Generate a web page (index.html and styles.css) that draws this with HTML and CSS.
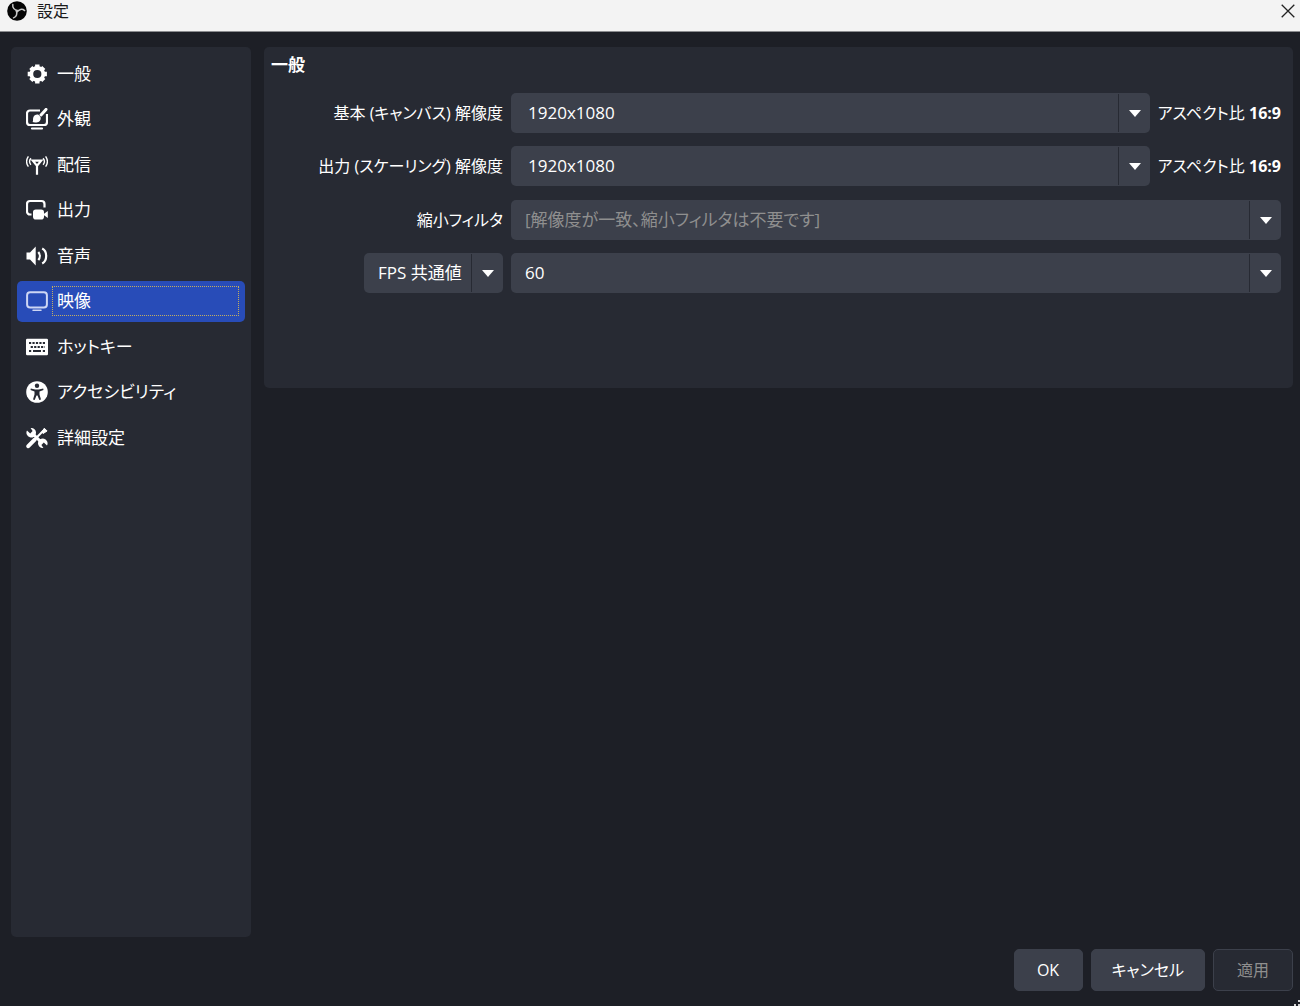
FILE: index.html
```html
<!DOCTYPE html>
<html lang="ja">
<head>
    <meta charset="UTF-8">
    <meta name="viewport" content="width=device-width, initial-scale=1.0">
    <title>設定</title>
    <link rel="stylesheet" href="styles.css">
</head>
<body>
    <header class="titlebar">
        <svg class="app-icon" viewBox="0 0 20 20" aria-hidden="true">
            <circle cx="10" cy="10" r="9.8" fill="#050505"/>
            <g fill="none" stroke="#c8c8c8" stroke-width="1.5" stroke-linecap="round">
                <path d="M10.6 9.4C7.6 9.2 5.2 6.8 5.8 3.6"/>
                <path d="M10.6 9.4C7.6 9.2 5.2 6.8 5.8 3.6" transform="rotate(120 10 10)"/>
                <path d="M10.6 9.4C7.6 9.2 5.2 6.8 5.8 3.6" transform="rotate(240 10 10)"/>
            </g>
        </svg>
        <h1>設定</h1>
        <button class="close" type="button" aria-label="閉じる">
            <svg viewBox="0 0 14 14"><path d="M0.7 0.7l12.6 12.6M13.3 0.7L0.7 13.3" fill="none" stroke="#222" stroke-width="1.3"/></svg>
        </button>
    </header>

    <main class="content">
        <nav class="sidebar">
            <ul>
                <li><a href="#general">
                    <svg viewBox="0 0 22 22">
                        <circle cx="11.3" cy="11" r="6" fill="none" stroke="#fff" stroke-width="3.8"/>
                        <g stroke="#fff" stroke-width="4.4">
                            <path d="M11.3 1.4v3M11.3 17.6v3M1.7 11h3M17.9 11h3"/>
                            <path d="M4.8 4.5l2 2M15.8 15.5l2 2M17.8 4.5l-2 2M6.8 15.5l-2 2"/>
                        </g>
                    </svg>
                    <span>一般</span></a></li>
                <li><a href="#appearance">
                    <svg viewBox="0 0 22 22">
                        <path d="M14 2.5H4a3 3 0 0 0-3 3V14a3 3 0 0 0 3 3h14a3 3 0 0 0 3-3V6" fill="none" stroke="#fff" stroke-width="2.2"/>
                        <path d="M6 20.5h10" stroke="#fff" stroke-width="2.2" stroke-linecap="round"/>
                        <path d="M6.5 14c1-1 .2-2.4.7-4.3C8 7.3 10.2 6 12.5 6.7l2 2.3c.8 3-1 5.2-4 5.4-1.5.1-3 .1-4-.4z" fill="#fff"/>
                        <path d="M15 7l5-5.6" stroke="#fff" stroke-width="3" stroke-linecap="round"/>
                    </svg>
                    <span>外観</span></a></li>
                <li><a href="#stream">
                    <svg viewBox="0 0 22 22" fill="none" stroke="#fff">
                        <path d="M6.8 6.7h8.4L11 11.8zM11 11v9.7" stroke-width="2.2"/>
                        <path d="M4.9 4.2c-1.6 2-1.6 4.6 0 6.6M17.1 4.2c1.6 2 1.6 4.6 0 6.6M2.4 2.3c-2.3 3.3-2.3 7.1 0 10.4M19.6 2.3c2.3 3.3 2.3 7.1 0 10.4" stroke-width="1.4"/>
                    </svg>
                    <span>配信</span></a></li>
                <li><a href="#output">
                    <svg viewBox="0 0 22 22">
                        <path d="M5.5 15.5H4a3 3 0 0 1-3-3V5a3 3 0 0 1 3-3h11.5a3 3 0 0 1 3 3v3.5" fill="none" stroke="#fff" stroke-width="2.2"/>
                        <rect x="7" y="10.5" width="11" height="10" rx="2.8" fill="#fff"/>
                        <path d="M17 15.5l4.8-3.5v7z" fill="#fff"/>
                    </svg>
                    <span>出力</span></a></li>
                <li><a href="#audio">
                    <svg viewBox="0 0 22 22">
                        <path d="M0.5 7.5H4L9.7 1.5v19L4 14.5H0.5z" fill="#fff"/>
                        <path d="M12.3 7c2 2.3 2 5.7 0 8" fill="none" stroke="#fff" stroke-width="2.2"/>
                        <path d="M16.2 3.5c5.3 2.8 5.3 12.2 0 15" fill="none" stroke="#fff" stroke-width="2.2"/>
                    </svg>
                    <span>音声</span></a></li>
                <li><a href="#video" class="selected" aria-current="page">
                    <svg viewBox="0 0 22 22">
                        <rect x="1.1" y="2.3" width="19.8" height="15.2" rx="3" fill="none" stroke="#cdd6f4" stroke-width="2"/>
                        <path d="M7 20.3h8" stroke="#cdd6f4" stroke-width="1.5" stroke-linecap="round"/>
                    </svg>
                    <span>映像</span></a></li>
                <li><a href="#hotkeys">
                    <svg viewBox="0 0 22 22">
                        <rect x="0" y="2.7" width="22" height="16.6" rx="1.2" fill="#fff"/>
                        <g stroke="#272a33" stroke-width="2.2">
                            <path d="M3 7h16" stroke-dasharray="2.2 1.25"/>
                            <path d="M4.7 11H19" stroke-dasharray="2.2 1.25"/>
                            <path d="M3 15h2.2M7 15h8M16.8 15H19"/>
                        </g>
                    </svg>
                    <span>ホットキー</span></a></li>
                <li><a href="#accessibility">
                    <svg viewBox="0 0 22 22">
                        <circle cx="11" cy="11" r="10.8" fill="#fff"/>
                        <circle cx="11" cy="4.8" r="2.2" fill="#272a33"/>
                        <path d="M4.8 7.5l4.4 1h3.6l4.4-1 .3 1.5-4 1.4v3.2l1.5 5-1.7.5-1.8-4.6h-1l-1.8 4.6L7 18.6l1.5-5v-3.2L4.500 9z" fill="#272a33"/>
                    </svg>
                    <span>アクセシビリティ</span></a></li>
                <li><a href="#advanced">
                    <svg viewBox="0 0 22 22">
                        <path d="M17.5 3.5L2.6 18.8" stroke="#fff" stroke-width="2"/>
                        <path d="M8.7 12.6l-6.4 6.6" stroke="#fff" stroke-width="4" stroke-linecap="round"/>
                        <path d="M15.8 5.2l2.5-4 2.8 2.8-4 2.5z" fill="#fff" stroke="#fff" stroke-linejoin="round"/>
                        <path d="M6 6l10 10" stroke="#fff" stroke-width="3"/>
                        <path d="M1 3.5a4.8 4.8 0 1 0 3.6-2.5l2 3-2.4 2.4z" fill="#fff"/>
                        <path d="M21 18.5a4.8 4.8 0 1 0-3.6 2.5l-2-3 2.4-2.4z" fill="#fff"/>
                    </svg>
                    <span>詳細設定</span></a></li>
            </ul>
        </nav>

        <section class="panel">
            <h2>一般</h2>
            <div class="form">
                <label for="baseRes">基本 (キャンバス) 解像度</label>
                <div class="field">
                    <div class="combo editable">
                        <select id="baseRes"><option>1920x1080</option></select>
                    </div>
                    <p>アスペクト比 <b>16:9</b></p>
                </div>

                <label for="outputRes">出力 (スケーリング) 解像度</label>
                <div class="field">
                    <div class="combo editable">
                        <select id="outputRes"><option>1920x1080</option></select>
                    </div>
                    <p>アスペクト比 <b>16:9</b></p>
                </div>

                <label for="filter">縮小フィルタ</label>
                <div class="combo">
                    <select id="filter" disabled><option>[解像度が一致、縮小フィルタは不要です]</option></select>
                </div>

                <div class="combo fps-type">
                    <select aria-label="FPS の種類"><option>FPS 共通値</option></select>
                </div>
                <div class="combo">
                    <select aria-label="FPS"><option>60</option></select>
                </div>
            </div>
        </section>
    </main>

    <footer class="buttons">
        <button type="button" class="ok">OK</button>
        <button type="button">キャンセル</button>
        <button type="button" class="apply" disabled>適用</button>
        <svg class="grip" viewBox="0 0 6 6" aria-hidden="true"><path d="M4 0h2v2H4zM0 4h2v2H0zM4 4h2v2H4z" fill="#d8d8d8"/></svg>
    </footer>
</body>
</html>
```
FILE: styles.css
```css
* {
    box-sizing: border-box;
}
body {
    margin: 0;
    min-height: 100vh;
    display: flex;
    flex-direction: column;
    background: #1d1f26;
    color: #fff;
    font-family: "Open Sans", "Noto Sans CJK JP", sans-serif;
    font-size: 17px;
    line-height: 24px;
    font-feature-settings: "palt";
}
h1, h2, p, ul {
    margin: 0;
    padding: 0;
}
button, select {
    font: inherit;
    font-feature-settings: inherit;
    color: inherit;
}

/* title bar */
.titlebar {
    display: flex;
    align-items: center;
    height: 32px;
    padding: 0 5px 10px 7px;
    background: #f3f3f3;
    border-bottom: 1px solid #8b8c8f;
    color: #1a1a1a;
}
.titlebar h1 {
    flex: 1;
    margin-left: 10px;
    font-size: 16px;
    font-weight: normal;
    line-height: 22px;
}
.app-icon {
    width: 20px;
    height: 20px;
}
.close {
    display: flex;
    padding: 0;
    border: 0;
    background: none;
}
.close svg {
    width: 14px;
    height: 14px;
}

.content {
    flex: 1;
    display: flex;
    align-items: flex-start;
    gap: 13px;
    padding: 15px 7px 12px 11px;
}

/* sidebar */
.sidebar {
    align-self: stretch;
    width: 240px;
    padding: 6px;
    background: #272a33;
    border-radius: 5px;
}
.sidebar ul {
    display: flex;
    flex-direction: column;
    justify-content: space-between;
    min-height: 405px;
    list-style: none;
}
.sidebar a {
    display: flex;
    align-items: center;
    gap: 4px;
    height: 41px;
    padding: 0 6px 0 9px;
    border-radius: 5px;
    color: #fff;
    text-decoration: none;
}
.sidebar svg {
    width: 22px;
    height: 22px;
}
.sidebar span {
    flex: 1;
    padding: 2px 4px;
    border: 1px solid transparent;
}
.sidebar .selected {
    background: #284cb8;
}
.sidebar .selected span {
    border: 1px dotted #c3ad62;
}

/* settings panel */
.panel {
    flex: 1;
    min-height: 341px;
    padding: 6px 12px 6px 7px;
    background: #272a33;
    border-radius: 5px;
}
.panel h2 {
    margin-bottom: 16px;
    font-size: 17px;
    font-weight: bold;
}
.form {
    display: grid;
    grid-template-columns: 232px 1fr;
    column-gap: 8px;
    align-content: space-between;
    align-items: center;
    min-height: 200px;
}
.form label {
    font-size: 16px;
    text-align: right;
}
.field {
    display: flex;
    align-items: center;
    gap: 8px;
}
.field .combo {
    flex: 1;
}
.field p {
    font-size: 16px;
}

.combo {
    position: relative;
}
.combo select {
    display: block;
    width: 100%;
    height: 40px;
    padding: 0 40px 0 14px;
    appearance: none;
    background: #3c404b;
    border: 0;
    border-radius: 5px;
}
.combo.editable select {
    padding-left: 17px;
}
.combo select:disabled {
    color: #8f8f8f;
    opacity: 1;
}
/* divider and arrow over the right end of the drop-down */
.combo::before {
    content: "";
    position: absolute;
    top: 1px;
    bottom: 1px;
    right: 31px;
    width: 1px;
    background: #272a33;
    pointer-events: none;
}
.combo::after {
    content: "";
    position: absolute;
    top: 17px;
    right: 9px;
    border: 6px solid transparent;
    border-top: 7px solid #fff;
    border-bottom: 0;
    pointer-events: none;
}
.fps-type {
    justify-self: end;
}
.combo.fps-type select {
    width: 139px;
    padding-right: 32px;
}

/* dialog buttons */
.buttons {
    position: relative;
    display: flex;
    justify-content: flex-end;
    gap: 8px;
    padding: 0 7px 15px;
}
.buttons button {
    height: 42px;
    min-width: 114px;
    padding: 0 20px;
    background: #3c404b;
    border: 1px solid #3c404b;
    border-radius: 5px;
    font-size: 16px;
}
.buttons .ok {
    min-width: 69px;
}
.buttons .apply {
    min-width: 80px;
    background: #272a33;
    color: #8f8f8f;
}
.grip {
    position: absolute;
    right: 0;
    bottom: 0;
    width: 6px;
    height: 6px;
}
```
